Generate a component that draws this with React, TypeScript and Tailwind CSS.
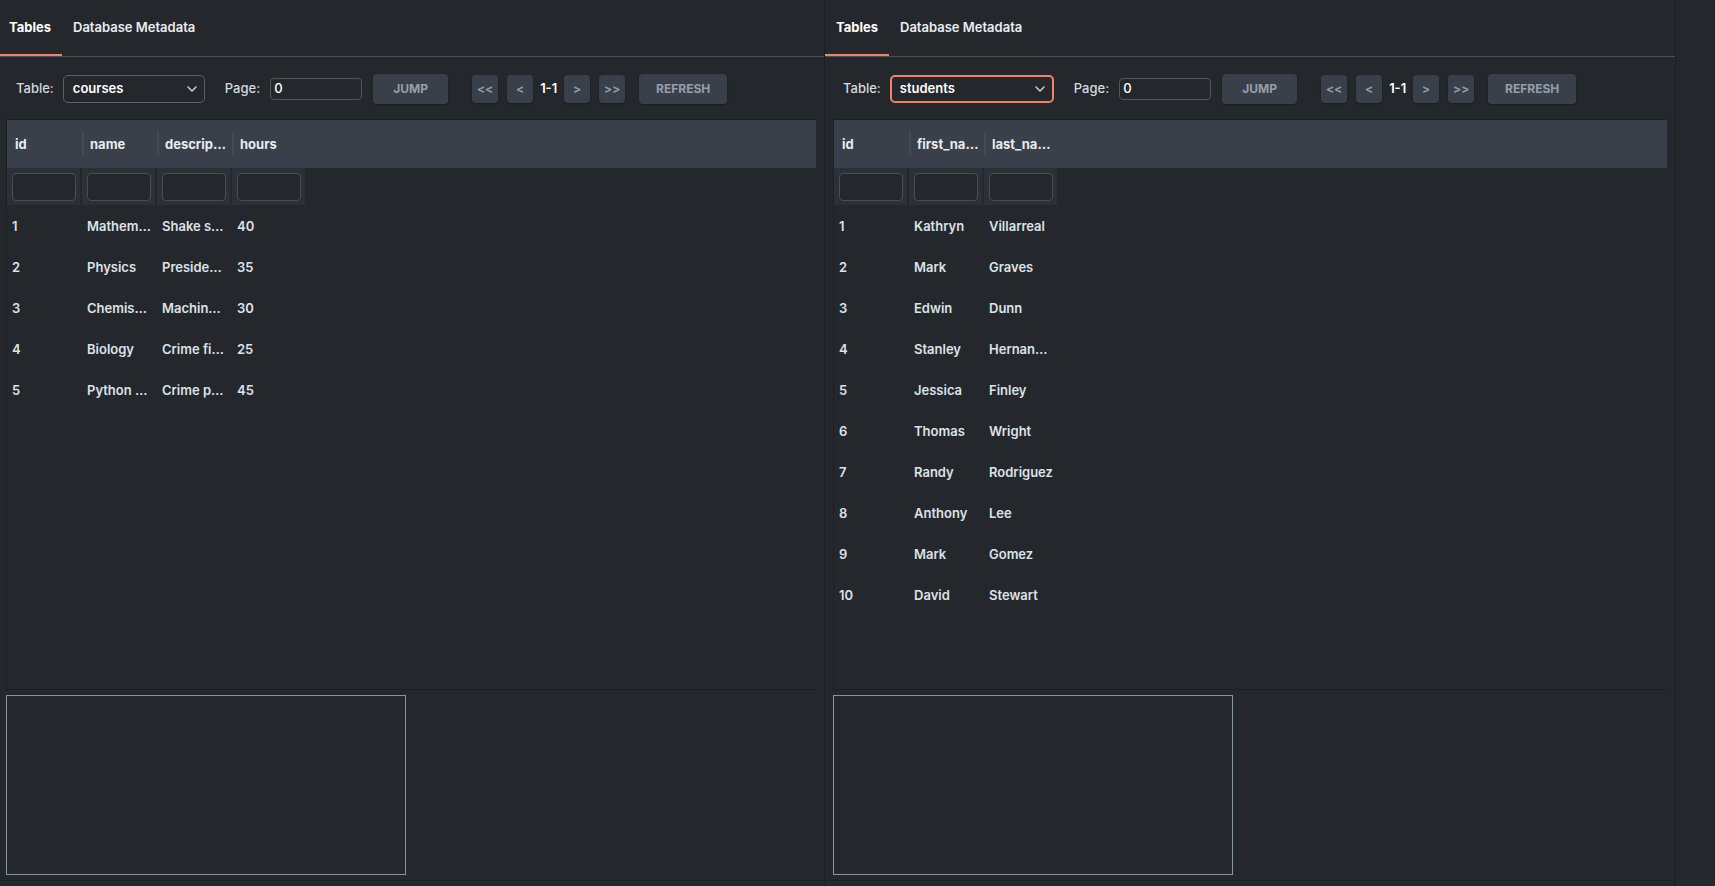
import React from "react";

const Chevron = () => (
  <svg width="10" height="6" viewBox="0 0 10 6" fill="none">
    <path d="M1 1l4 4 4-4" stroke="#c9d1d9" strokeWidth="1.5" strokeLinecap="round" strokeLinejoin="round" />
  </svg>
);

const btn =
  "flex items-center justify-center rounded-[4px] bg-[#39404a] font-bold text-[#959ea8] shadow-[0_1px_2px_rgba(0,0,0,0.35)] pt-[1px]";

type PanelProps = {
  table: string;
  selectW: string;
  focused: boolean;
  headers: string[];
  rows: string[][];
};

function Panel({ table, selectW, focused, headers, rows }: PanelProps) {
  return (
    <div className="flex h-[881px] w-full flex-col border-b border-[#1c1f23]">
      {/* tabs */}
      <div className="flex h-[57px] shrink-0 border-b border-[#4b5058]">
        <div className="flex h-[56px] w-[64px] items-center justify-center border-b-2 border-[#f2816c] pt-[2px] text-[13px] font-bold text-white">
          Tables
        </div>
        <div className="flex h-[56px] items-center px-[11px] text-[13px] font-semibold text-[#e8edf2]">
          Database Metadata
        </div>
      </div>
      {/* toolbar */}
      <div className="flex h-[62px] shrink-0 items-center pl-[18px] pt-[1px]">
        <span className="pt-[1px] text-[13px] font-medium text-[#d3d9df]">Table:</span>
        <div
          className={
            "ml-[9px] flex h-[28px] items-center justify-between rounded-[5px] pr-[7px] " +
            selectW +
            (focused ? " border-2 border-[#f2816c] pl-[8px]" : " border border-[#5a626c] pl-[9px]")
          }
        >
          <span className="pt-[1px] text-[13px] font-semibold text-white">{table}</span>
          <Chevron />
        </div>
        <span className="ml-[20px] pt-[1px] text-[13px] font-medium text-[#d3d9df]">Page:</span>
        <div className="ml-[10px] flex h-[22px] w-[92px] items-center rounded-[4px] border border-[#4f5660] pl-[3px] pt-[1px] text-[13px] font-medium text-white">
          0
        </div>
        <div className={btn + " ml-[11px] h-[30px] w-[75px] text-[12px]"}>JUMP</div>
        <div className={btn + " ml-[24px] h-[28px] w-[26px] text-[12px]"}>&lt;&lt;</div>
        <div className={btn + " ml-[9px] h-[28px] w-[26px] text-[12px]"}>&lt;</div>
        <span className="ml-[7px] pt-[1px] text-[13px] font-semibold text-white">1-1</span>
        <div className={btn + " ml-[7px] h-[28px] w-[26px] text-[12px]"}>&gt;</div>
        <div className={btn + " ml-[9px] h-[28px] w-[26px] text-[12px]"}>&gt;&gt;</div>
        <div className={btn + " ml-[14px] h-[30px] w-[88px] text-[12px]"}>REFRESH</div>
      </div>
      {/* table */}
      <div className="mx-[8px] flex h-[571px] shrink-0 flex-col border-t border-b border-l border-[#1c1f23]">
        <div className="flex h-[48px] shrink-0 items-center bg-[#39404a]">
          {headers.map((h, i) => (
            <div key={i} className="relative flex h-full w-[75px] items-center pl-[8px] pr-[4px] pt-[2px]">
              {i > 0 && <div className="absolute left-0 top-[12px] h-[23px] w-[2px] bg-[#444b55]" />}
              <span className="truncate text-[13px] font-bold text-[#e8ecf0]">{h}</span>
            </div>
          ))}
        </div>
        <div className="flex h-[37px] shrink-0">
          {headers.map((_, i) => (
            <div key={i} className="mr-[2px] flex h-full w-[73px] bg-[#2c3138] pt-[5px] pl-[5px]">
              <div className="h-[28px] w-[64px] rounded-[4px] border border-[#474e57] bg-[#24282d]" />
            </div>
          ))}
        </div>
        {rows.map((r, ri) => (
          <div key={ri} className="flex h-[41px] shrink-0 items-center pt-[2px]">
            {r.map((c, ci) => (
              <div key={ci} className="w-[75px] truncate pl-[5px] pr-[4px] text-[13px] font-semibold text-[#dde2e8]">
                {c}
              </div>
            ))}
          </div>
        ))}
      </div>
      <div className="ml-[8px] mt-[5px] h-[180px] w-[400px] shrink-0 border border-[#8794a1]" />
    </div>
  );
}

export default function App() {
  return (
    <div className="flex h-[886px] w-[1715px] overflow-hidden bg-[#24282d] font-['Inter',sans-serif]">
      <div className="h-full w-[824px] shrink-0 overflow-hidden">
        <div className="-ml-[2px] h-full w-[826px]">
          <Panel
            table="courses"
            selectW="w-[142px]"
            focused={false}
            headers={["id", "name", "descrip…", "hours"]}
            rows={[
              ["1", "Mathem…", "Shake s…", "40"],
              ["2", "Physics", "Preside…", "35"],
              ["3", "Chemis…", "Machin…", "30"],
              ["4", "Biology", "Crime fi…", "25"],
              ["5", "Python …", "Crime p…", "45"],
            ]}
          />
        </div>
      </div>
      <div className="h-full w-px shrink-0 bg-[#1a1d21]" />
      <div className="h-full w-[850px] shrink-0">
        <Panel
          table="students"
          selectW="w-[164px]"
          focused={true}
          headers={["id", "first_na…", "last_na…"]}
          rows={[
            ["1", "Kathryn", "Villarreal"],
            ["2", "Mark", "Graves"],
            ["3", "Edwin", "Dunn"],
            ["4", "Stanley", "Hernan…"],
            ["5", "Jessica", "Finley"],
            ["6", "Thomas", "Wright"],
            ["7", "Randy", "Rodriguez"],
            ["8", "Anthony", "Lee"],
            ["9", "Mark", "Gomez"],
            ["10", "David", "Stewart"],
          ]}
        />
      </div>
      <div className="h-full w-px shrink-0 bg-[#1a1d21]" />
      <div className="h-full flex-1" />
    </div>
  );
}
